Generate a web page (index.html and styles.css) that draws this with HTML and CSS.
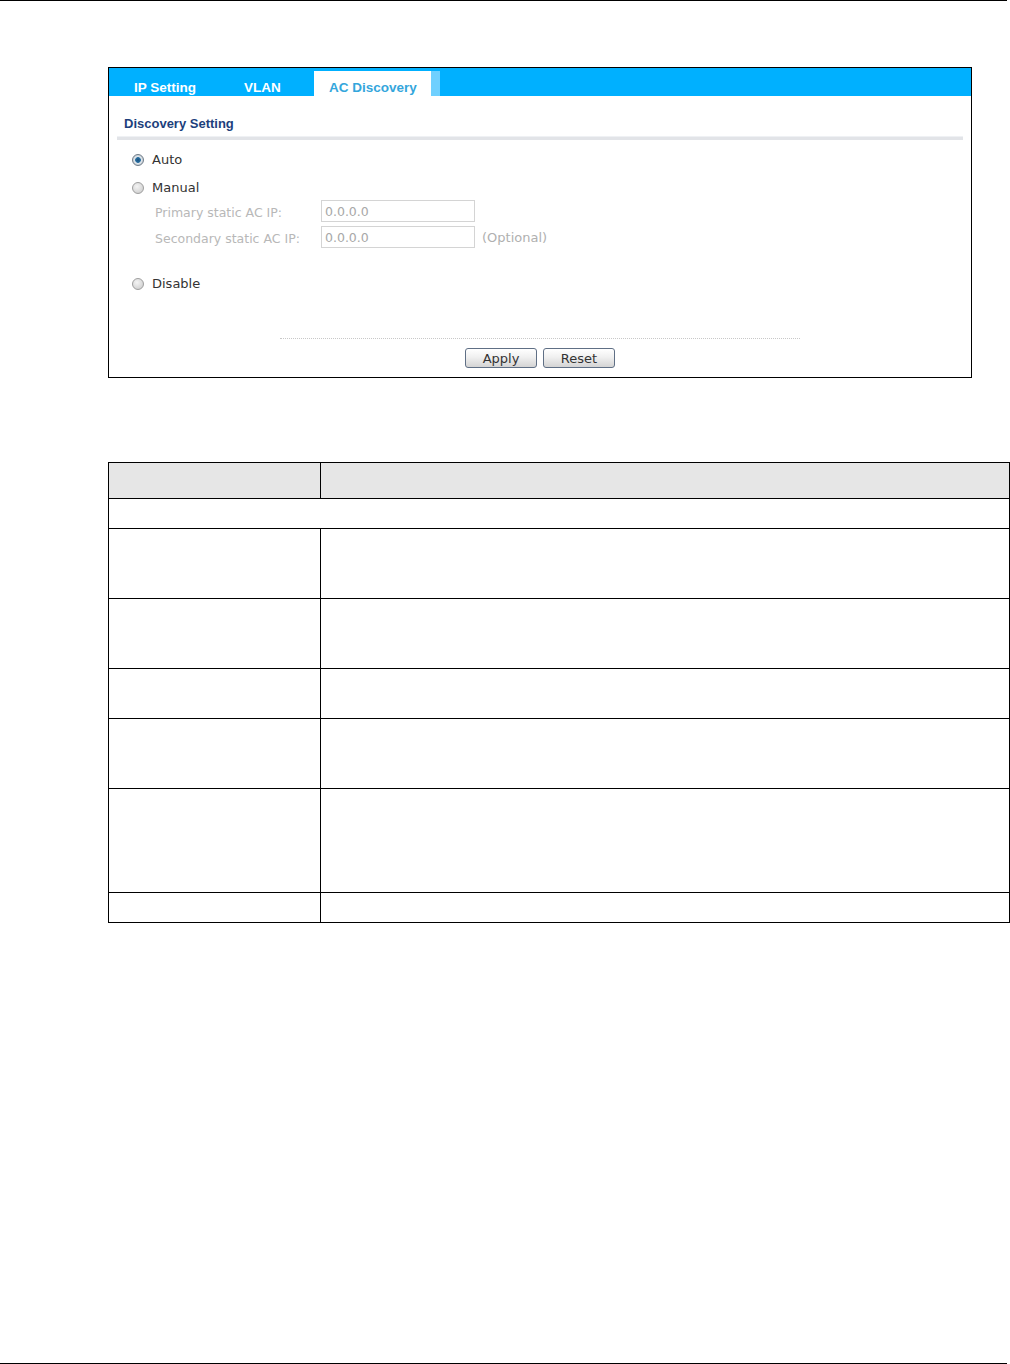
FILE: index.html
```html
<!DOCTYPE html>
<html lang="en">
<head>
    <meta charset="UTF-8">
    <title>AC Discovery</title>
    <link rel="stylesheet" href="styles.css">
</head>
<body>
    <div class="rule top"></div>

    <div class="shot">
        <div class="tabbar">
            <div class="tab tab-ip">IP Setting</div>
            <div class="tab tab-vlan">VLAN</div>
            <div class="tab tab-ac active">AC Discovery</div>
            <div class="tab-edge"></div>
        </div>

        <div class="section">
            <div class="heading">Discovery Setting</div>
            <div class="heading-bar"></div>
        </div>

        <div class="options">
            <div class="opt opt-auto"><span class="radio checked"></span>Auto</div>
            <div class="opt opt-manual"><span class="radio"></span>Manual</div>
            <div class="field field-1">
                <span class="label">Primary static AC IP:</span>
                <span class="input">0.0.0.0</span>
            </div>
            <div class="field field-2">
                <span class="label">Secondary static AC IP:</span>
                <span class="input">0.0.0.0</span>
                <span class="hint">(Optional)</span>
            </div>
            <div class="opt opt-disable"><span class="radio"></span>Disable</div>
        </div>

        <div class="foot">
            <div class="dots"></div>
            <div class="buttons">
                <button type="button" class="btn">Apply</button>
                <button type="button" class="btn">Reset</button>
            </div>
        </div>
    </div> <!-- shot end -->

    <table class="desc">
        <tr class="head"><td class="c1">&nbsp;</td><td>&nbsp;</td></tr>
        <tr class="r30"><td colspan="2">&nbsp;</td></tr>
        <tr class="r70"><td class="c1">&nbsp;</td><td>&nbsp;</td></tr>
        <tr class="r70"><td class="c1">&nbsp;</td><td>&nbsp;</td></tr>
        <tr class="r50"><td class="c1">&nbsp;</td><td>&nbsp;</td></tr>
        <tr class="r70"><td class="c1">&nbsp;</td><td>&nbsp;</td></tr>
        <tr class="r104"><td class="c1">&nbsp;</td><td>&nbsp;</td></tr>
        <tr class="r30"><td class="c1">&nbsp;</td><td>&nbsp;</td></tr>
    </table>

    <div class="rule bottom"></div>
</body>
</html>
```

FILE: styles.css
```css
body {
    margin: 0;
    background-color: white;
    font-family: "DejaVu Sans", sans-serif;
}

div.rule {
    width: 1007px;
    height: 1px;
    background-color: black;
}

div.rule.bottom {
    margin-top: 440px;
}

/* screenshot box */
div.shot {
    width: 862px;
    height: 309px;
    margin: 66px 0 0 108px;
    border: 1px solid black;
}

div.shot div.tabbar {
    display: flex;
    align-items: flex-end;
    height: 28px;
    background-color: #00b0ff;
}

div.tabbar div.tab {
    height: 25px;
    box-sizing: border-box;
    padding-top: 8px;
    line-height: 17px;
    font-family: "Liberation Sans", sans-serif;
    font-weight: bold;
    font-size: 13.5px;
    color: white;
}

div.tabbar div.tab-ip {
    width: 135px;
    padding-left: 25px;
}

div.tabbar div.tab-vlan {
    width: 70px;
}

div.tabbar div.tab-ac {
    width: 117px;
    padding-left: 15px;
}

div.tabbar div.tab.active {
    background-color: white;
    color: #34a6dc;
}

div.tabbar div.tab-edge {
    width: 9px;
    height: 25px;
    background-color: #6fd0ff;
}

div.shot div.section {
    margin: 18px 8px 0 8px;
}

div.section div.heading {
    height: 20px;
    line-height: 20px;
    padding-left: 7px;
    font-family: "Liberation Sans", sans-serif;
    font-weight: bold;
    font-size: 13px;
    color: #1d3f7c;
}

div.section div.heading-bar {
    height: 4px;
    margin-top: 2px;
    background-color: #e2e4e8;
    border-top: 1px solid #eff1f4;
    box-sizing: border-box;
}

div.shot div.options {
    padding-left: 24px;
    font-size: 13px;
    color: #333;
}

div.options div.opt {
    display: flex;
    align-items: center;
    height: 20px;
}

div.options div.opt-auto { margin-top: 9px; }
div.options div.opt-manual { margin-top: 8px; }
div.options div.opt-disable { margin-top: 25px; }

div.options span.radio {
    width: 12px;
    height: 12px;
    margin-right: 8px;
    margin-top: 2px;
    margin-left: -1px;
    box-sizing: border-box;
    border: 1px solid #9e9e9e;
    border-radius: 50%;
    background: radial-gradient(circle at 40% 35%, #f4f4f4, #c8c8c8);
}

div.options span.radio.checked {
    border-color: #707c88;
    background: radial-gradient(circle, #174f80 0, #2a6fa0 2.5px, #e4eaef 3.2px, #c6ced5 5px);
}

div.options div.field {
    display: flex;
    align-items: center;
    height: 22px;
    padding-left: 22px;
    font-size: 12.5px;
    color: #b8b8b8;
}

div.options div.field-1 { margin-top: 3px; }
div.options div.field-2 { margin-top: 4px; }

div.field span.label {
    width: 166px;
    padding-top: 3px;
}

div.field span.input {
    width: 154px;
    height: 22px;
    box-sizing: border-box;
    padding-left: 3px;
    padding-top: 1px;
    line-height: 20px;
    border: 1px solid #d4d4d4;
    color: #a8a8a8;
}

div.field span.hint {
    margin-left: 7px;
    font-size: 13px;
    color: #b0b0b0;
}

div.shot div.foot {
    margin-top: 45px;
}

div.foot div.dots {
    width: 520px;
    margin: 0 auto;
    border-top: 1px dotted #c8c8c8;
}

div.foot div.buttons {
    display: flex;
    justify-content: center;
    gap: 6px;
    margin-top: 9px;
}

div.buttons button.btn {
    width: 72px;
    height: 20px;
    padding: 2px 0 0 0;
    border: 1px solid #5f6f85;
    border-radius: 3px;
    background: linear-gradient(#ffffff, #f0f0f0 45%, #d4d4d4);
    font-family: "DejaVu Sans", sans-serif;
    font-size: 13px;
    color: #333;
    line-height: 16px;
}

/* description table */
table.desc {
    width: 902px;
    margin: 84px 0 0 108px;
    border-collapse: collapse;
}

table.desc td {
    border: 1px solid black;
    padding: 0;
    font-size: 13px;
}

table.desc td.c1 {
    width: 211px;
}

table.desc tr.head td {
    height: 35px;
    background-color: #e6e6e6;
}

table.desc tr.r30 td { height: 29px; }
table.desc tr.r50 td { height: 49px; }
table.desc tr.r70 td { height: 69px; }
table.desc tr.r104 td { height: 103px; }
```
